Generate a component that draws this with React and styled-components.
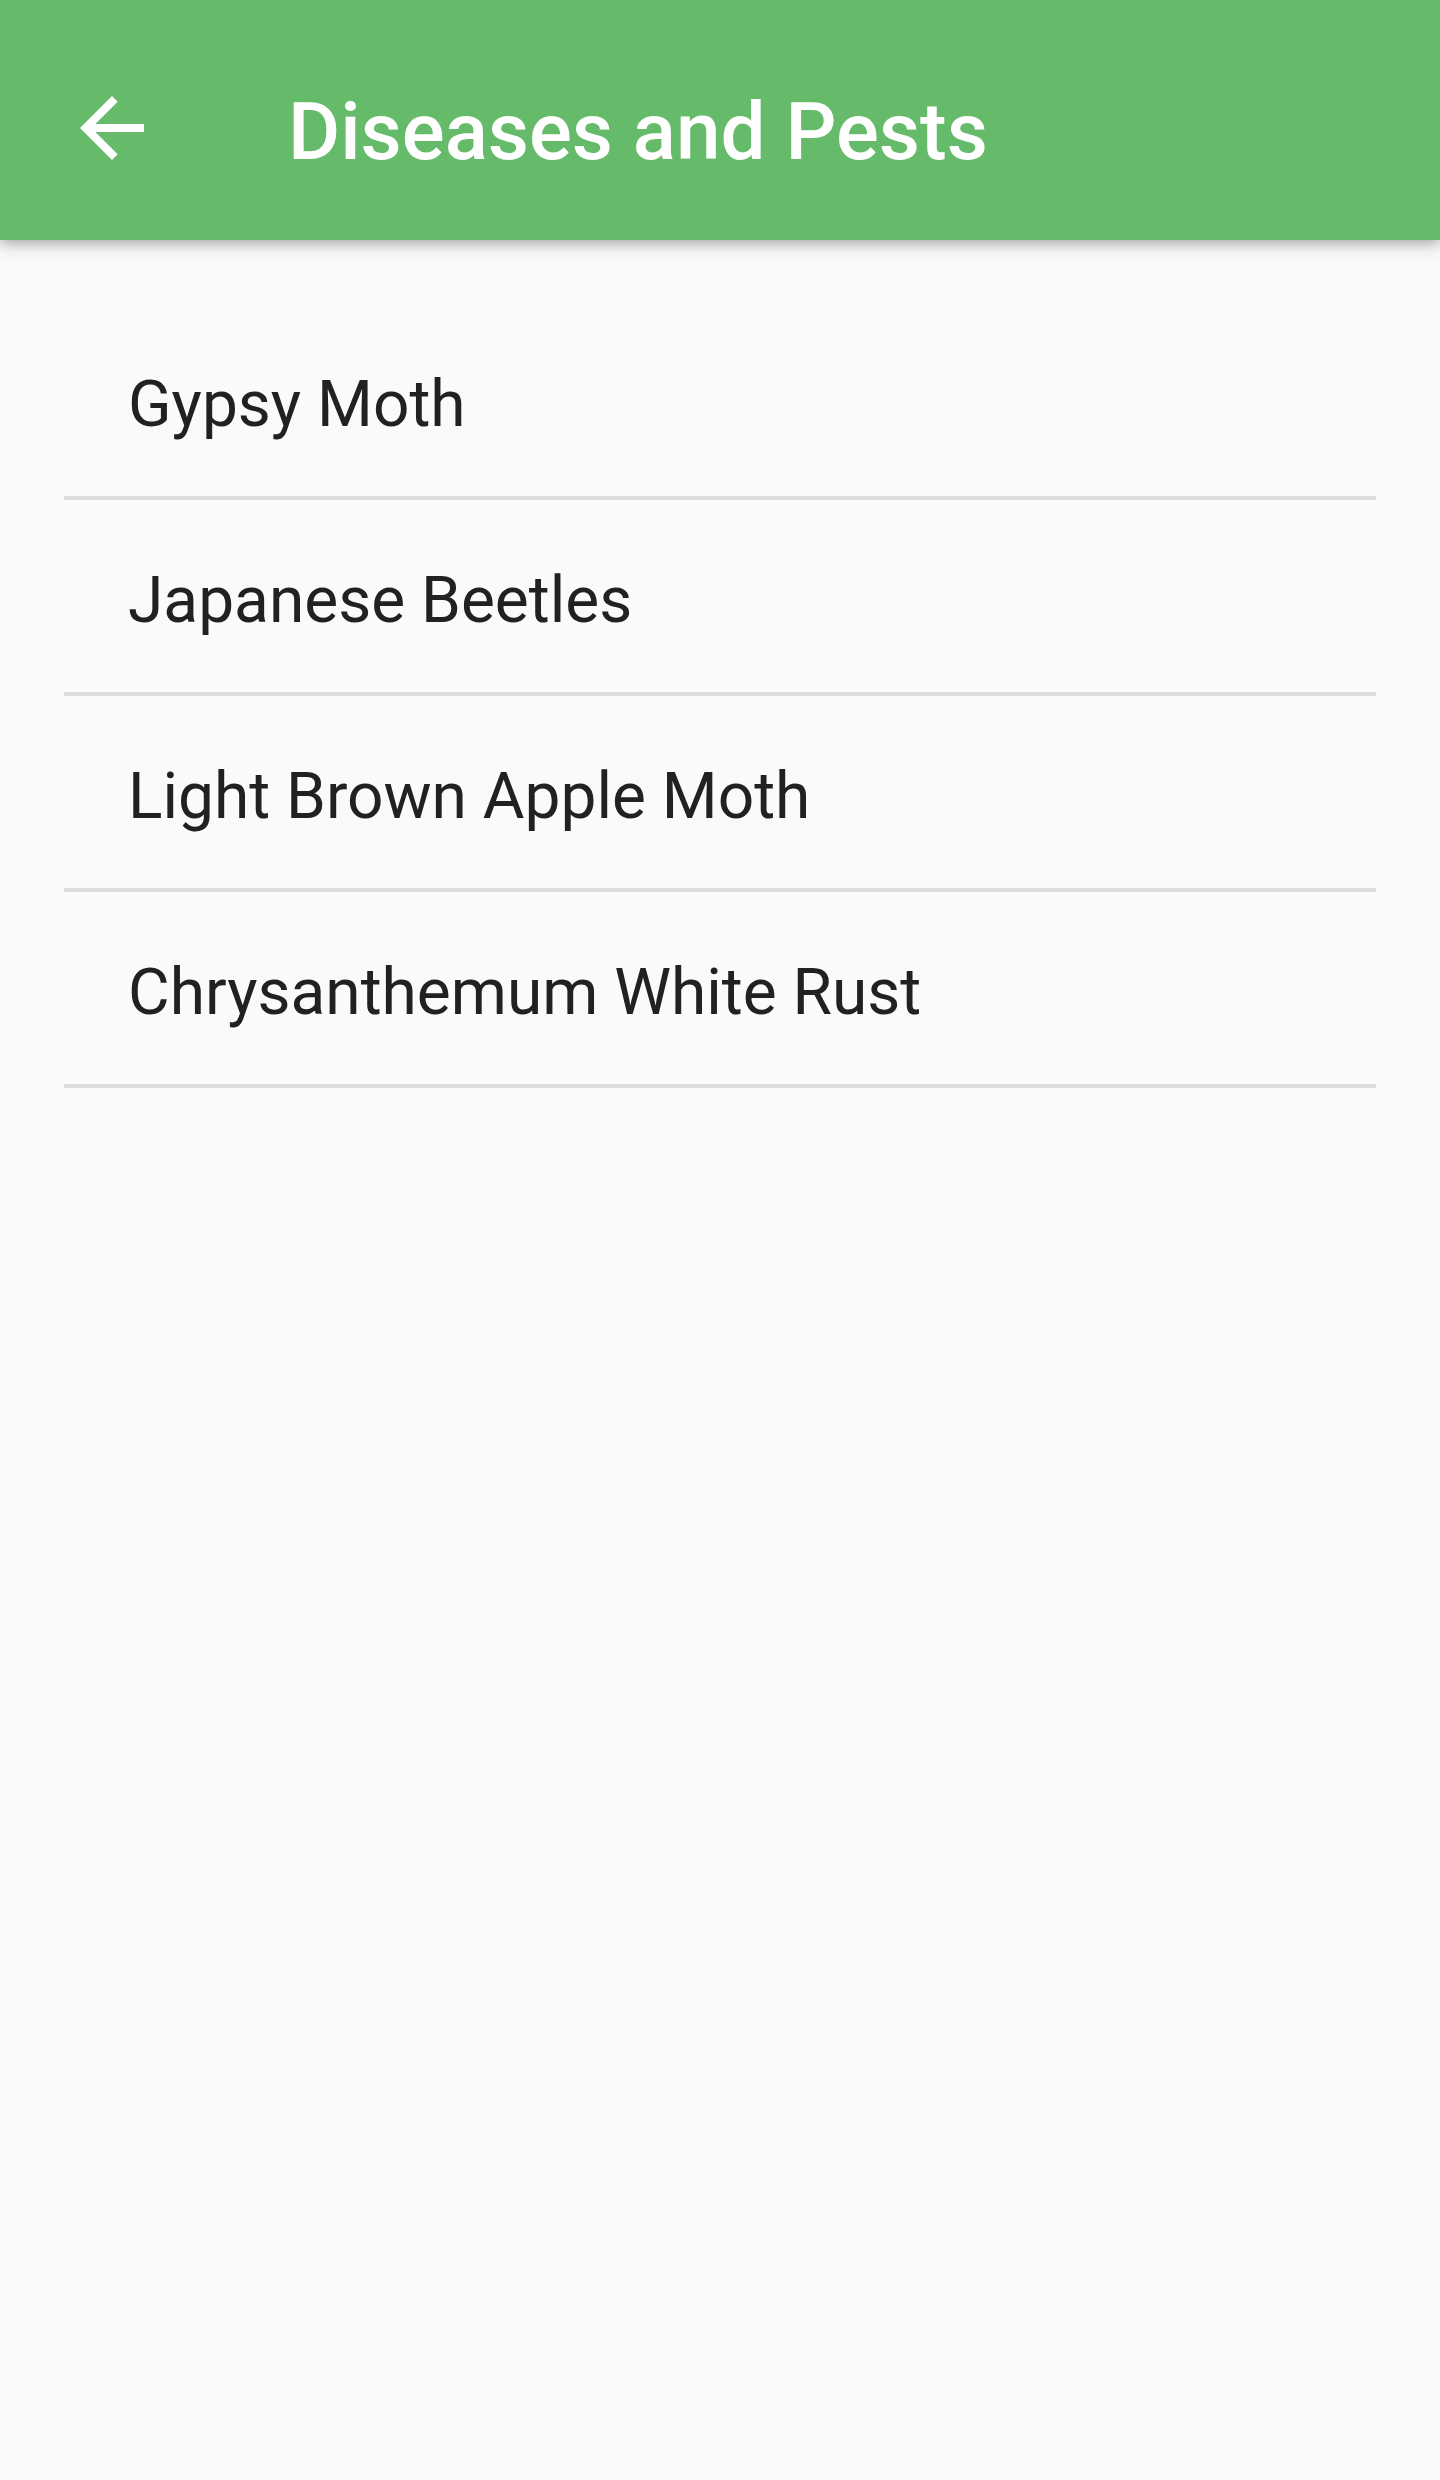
import React from "react";
import styled, { createGlobalStyle } from "styled-components";

const GlobalStyle = createGlobalStyle`
  html, body {
    margin: 0;
    padding: 0;
    background: #fafafa;
  }
  body {
    font-family: Roboto, "Liberation Sans", Arial, sans-serif;
  }
`;

const Page = styled.div`
  width: 1440px;
  min-height: 2480px;
  background: #fafafa;
`;

const AppBar = styled.header`
  position: relative;
  z-index: 1;
  height: 240px;
  box-sizing: border-box;
  padding-top: 16px;
  background: #66bb6a;
  box-shadow: 0 4px 10px rgba(0, 0, 0, 0.22), 0 8px 20px rgba(0, 0, 0, 0.1);
`;

const Toolbar = styled.div`
  height: 224px;
  display: flex;
  align-items: center;
`;

const Leading = styled.button`
  width: 224px;
  height: 224px;
  display: flex;
  align-items: center;
  justify-content: center;
  border: none;
  background: none;
  padding: 0;
  cursor: pointer;
`;

const Title = styled.h1`
  margin: 0 0 0 64px;
  padding-top: 8px;
  color: #ffffff;
  font-size: 80px;
  font-weight: 500;
  letter-spacing: 0;
`;

const List = styled.ul`
  list-style: none;
  margin: 0;
  padding: 64px 64px 0;
`;

// 192px row: 184 content + 8 top padding, divider drawn as bottom border
const Item = styled.li`
  height: 184px;
  padding: 8px 64px 0;
  display: flex;
  align-items: center;
  border-bottom: 4px solid #dddddd;
  color: #212121;
  font-size: 64px;
  font-weight: 400;
`;

const items = [
  "Gypsy Moth",
  "Japanese Beetles",
  "Light Brown Apple Moth",
  "Chrysanthemum White Rust",
];

function BackArrow() {
  return (
    <svg width="96" height="96" viewBox="0 0 24 24" fill="#ffffff">
      <path d="M20 11H7.83l5.59-5.59L12 4l-8 8 8 8 1.41-1.41L7.83 13H20v-2z" />
    </svg>
  );
}

export default function App() {
  return (
    <Page>
      <GlobalStyle />
      <AppBar>
        <Toolbar>
          <Leading aria-label="Back">
            <BackArrow />
          </Leading>
          <Title>Diseases and Pests</Title>
        </Toolbar>
      </AppBar>
      <List>
        {items.map((name) => (
          <Item key={name}>{name}</Item>
        ))}
      </List>
    </Page>
  );
}
